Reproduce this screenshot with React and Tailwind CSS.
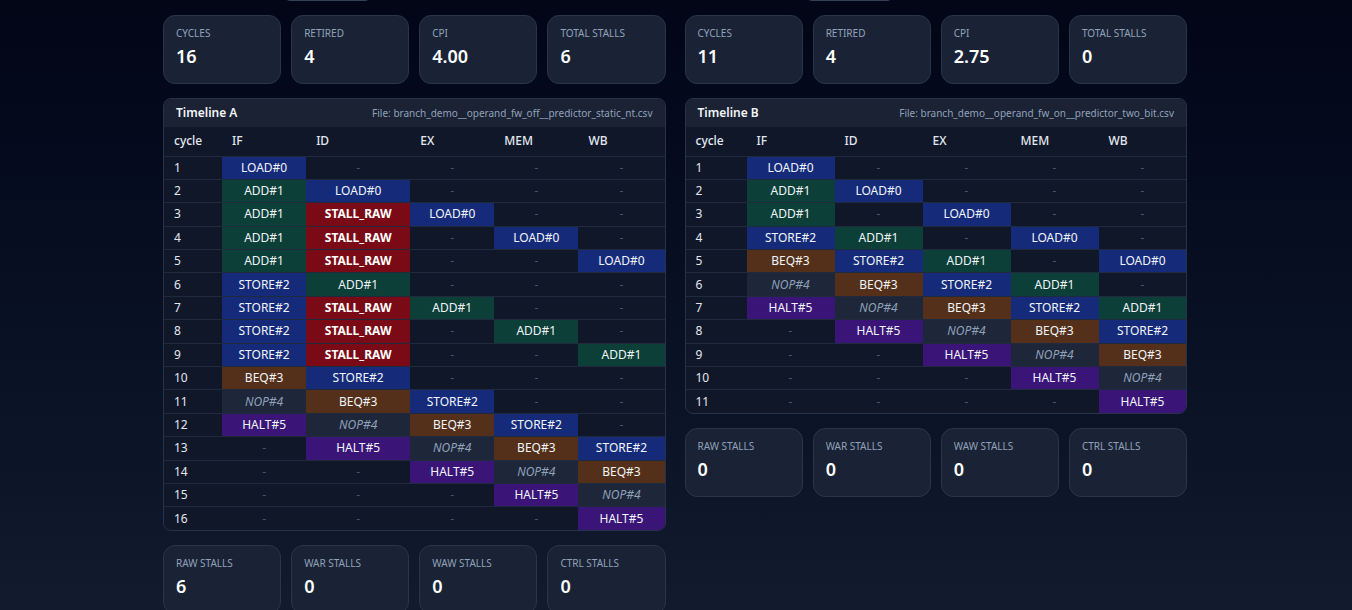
import React from 'react';

const STAGES = ['IF', 'ID', 'EX', 'MEM', 'WB'];

const timelineA = [
  ['LOAD#0', '-', '-', '-', '-'],
  ['ADD#1', 'LOAD#0', '-', '-', '-'],
  ['ADD#1', 'STALL_RAW', 'LOAD#0', '-', '-'],
  ['ADD#1', 'STALL_RAW', '-', 'LOAD#0', '-'],
  ['ADD#1', 'STALL_RAW', '-', '-', 'LOAD#0'],
  ['STORE#2', 'ADD#1', '-', '-', '-'],
  ['STORE#2', 'STALL_RAW', 'ADD#1', '-', '-'],
  ['STORE#2', 'STALL_RAW', '-', 'ADD#1', '-'],
  ['STORE#2', 'STALL_RAW', '-', '-', 'ADD#1'],
  ['BEQ#3', 'STORE#2', '-', '-', '-'],
  ['NOP#4', 'BEQ#3', 'STORE#2', '-', '-'],
  ['HALT#5', 'NOP#4', 'BEQ#3', 'STORE#2', '-'],
  ['-', 'HALT#5', 'NOP#4', 'BEQ#3', 'STORE#2'],
  ['-', '-', 'HALT#5', 'NOP#4', 'BEQ#3'],
  ['-', '-', '-', 'HALT#5', 'NOP#4'],
  ['-', '-', '-', '-', 'HALT#5'],
];

const timelineB = [
  ['LOAD#0', '-', '-', '-', '-'],
  ['ADD#1', 'LOAD#0', '-', '-', '-'],
  ['ADD#1', '-', 'LOAD#0', '-', '-'],
  ['STORE#2', 'ADD#1', '-', 'LOAD#0', '-'],
  ['BEQ#3', 'STORE#2', 'ADD#1', '-', 'LOAD#0'],
  ['NOP#4', 'BEQ#3', 'STORE#2', 'ADD#1', '-'],
  ['HALT#5', 'NOP#4', 'BEQ#3', 'STORE#2', 'ADD#1'],
  ['-', 'HALT#5', 'NOP#4', 'BEQ#3', 'STORE#2'],
  ['-', '-', 'HALT#5', 'NOP#4', 'BEQ#3'],
  ['-', '-', '-', 'HALT#5', 'NOP#4'],
  ['-', '-', '-', '-', 'HALT#5'],
];

function cellClass(v) {
  if (v === '-') return 'text-slate-600';
  if (v.startsWith('STALL')) return 'bg-[#7a0b16] text-white font-bold';
  if (v.startsWith('LOAD') || v.startsWith('STORE')) return 'bg-[#152b7a] text-slate-100';
  if (v.startsWith('ADD')) return 'bg-[#0b3f37] text-slate-100';
  if (v.startsWith('BEQ')) return 'bg-[#54301a] text-slate-100';
  if (v.startsWith('NOP')) return 'bg-[#1d2739] text-slate-400 italic';
  if (v.startsWith('HALT')) return 'bg-[#3a1477] text-slate-100';
  return 'text-slate-200';
}

function StatCard({label, value}) {
  return (
    <div className="rounded-xl border border-[#2a3548] bg-[#1a2335] px-3 pt-[10px] pb-[15px]">
      <div className="text-[10px] leading-[14px] uppercase text-slate-400">{label}</div>
      <div className="mt-1 text-lg leading-6 font-semibold text-white">{value}</div>
    </div>
  );
}

function StatRow({items}) {
  return (
    <div className="grid grid-cols-4 gap-2.5">
      {items.map(([l, v]) => (
        <StatCard key={l} label={l} value={v} />
      ))}
    </div>
  );
}

function Timeline({title, file, rows, widths}) {
  return (
    <div className="overflow-hidden rounded-lg border border-[#27324a] bg-[#0f1729]">
      <div className="flex h-7 items-center justify-between bg-[#1a2234] px-3">
        <span className="text-xs font-semibold text-slate-100">{title}</span>
        <span className="text-[10px] text-slate-400">File: {file}</span>
      </div>
      <table className="w-full table-fixed text-xs">
        <colgroup>
          {widths.map((w, i) => (
            <col key={i} style={{width: w}} />
          ))}
        </colgroup>
        <thead>
          <tr className="h-[29px] border-b border-[#1f2a3c]">
            <th className="px-2.5 text-left font-medium text-slate-200">cycle</th>
            {STAGES.map((s) => (
              <th key={s} className="px-2.5 text-left font-medium text-slate-200">
                {s}
              </th>
            ))}
          </tr>
        </thead>
        <tbody>
          {rows.map((r, i) => (
            <tr key={i} className="h-[23.4px] border-b border-[#1f2a3c] last:border-b-0">
              <td className="px-2.5 text-slate-200">{i + 1}</td>
              {r.map((v, j) => (
                <td key={j} className={'px-1 text-center ' + cellClass(v)}>
                  {v}
                </td>
              ))}
            </tr>
          ))}
        </tbody>
      </table>
    </div>
  );
}

function TopCut() {
  return (
    <div className="flex h-px items-end overflow-hidden">
      <div className="w-[121px]" />
      <div className="h-7 w-[87px] rounded-md border border-[#334155] bg-[#0f172a]" />
    </div>
  );
}

export default function App() {
  return (
    <div
      className="min-h-screen bg-gradient-to-b from-[#020617] to-[#131c30] pr-[2px] pb-10"
      style={{fontFamily: '"Noto Sans", "Open Sans", sans-serif'}}
    >
      <div className="mx-auto grid max-w-5xl grid-cols-2 items-start gap-[19px]">
        <div className="flex flex-col gap-3.5">
          <TopCut />
          <StatRow items={[['Cycles', '16'], ['Retired', '4'], ['CPI', '4.00'], ['Total stalls', '6']]} />
          <Timeline
            title="Timeline A"
            file="branch_demo__operand_fw_off__predictor_static_nt.csv"
            rows={timelineA}
            widths={['58px', '84px', '104px', '84px', '84px', '86px']}
          />
          <StatRow items={[['Raw stalls', '6'], ['War stalls', '0'], ['Waw stalls', '0'], ['Ctrl stalls', '0']]} />
        </div>
        <div className="flex flex-col gap-3.5">
          <TopCut />
          <StatRow items={[['Cycles', '11'], ['Retired', '4'], ['CPI', '2.75'], ['Total stalls', '0']]} />
          <Timeline
            title="Timeline B"
            file="branch_demo__operand_fw_on__predictor_two_bit.csv"
            rows={timelineB}
            widths={['61px', '88px', '88px', '88px', '88px', '88px']}
          />
          <StatRow items={[['Raw stalls', '0'], ['War stalls', '0'], ['Waw stalls', '0'], ['Ctrl stalls', '0']]} />
        </div>
      </div>
    </div>
  );
}
